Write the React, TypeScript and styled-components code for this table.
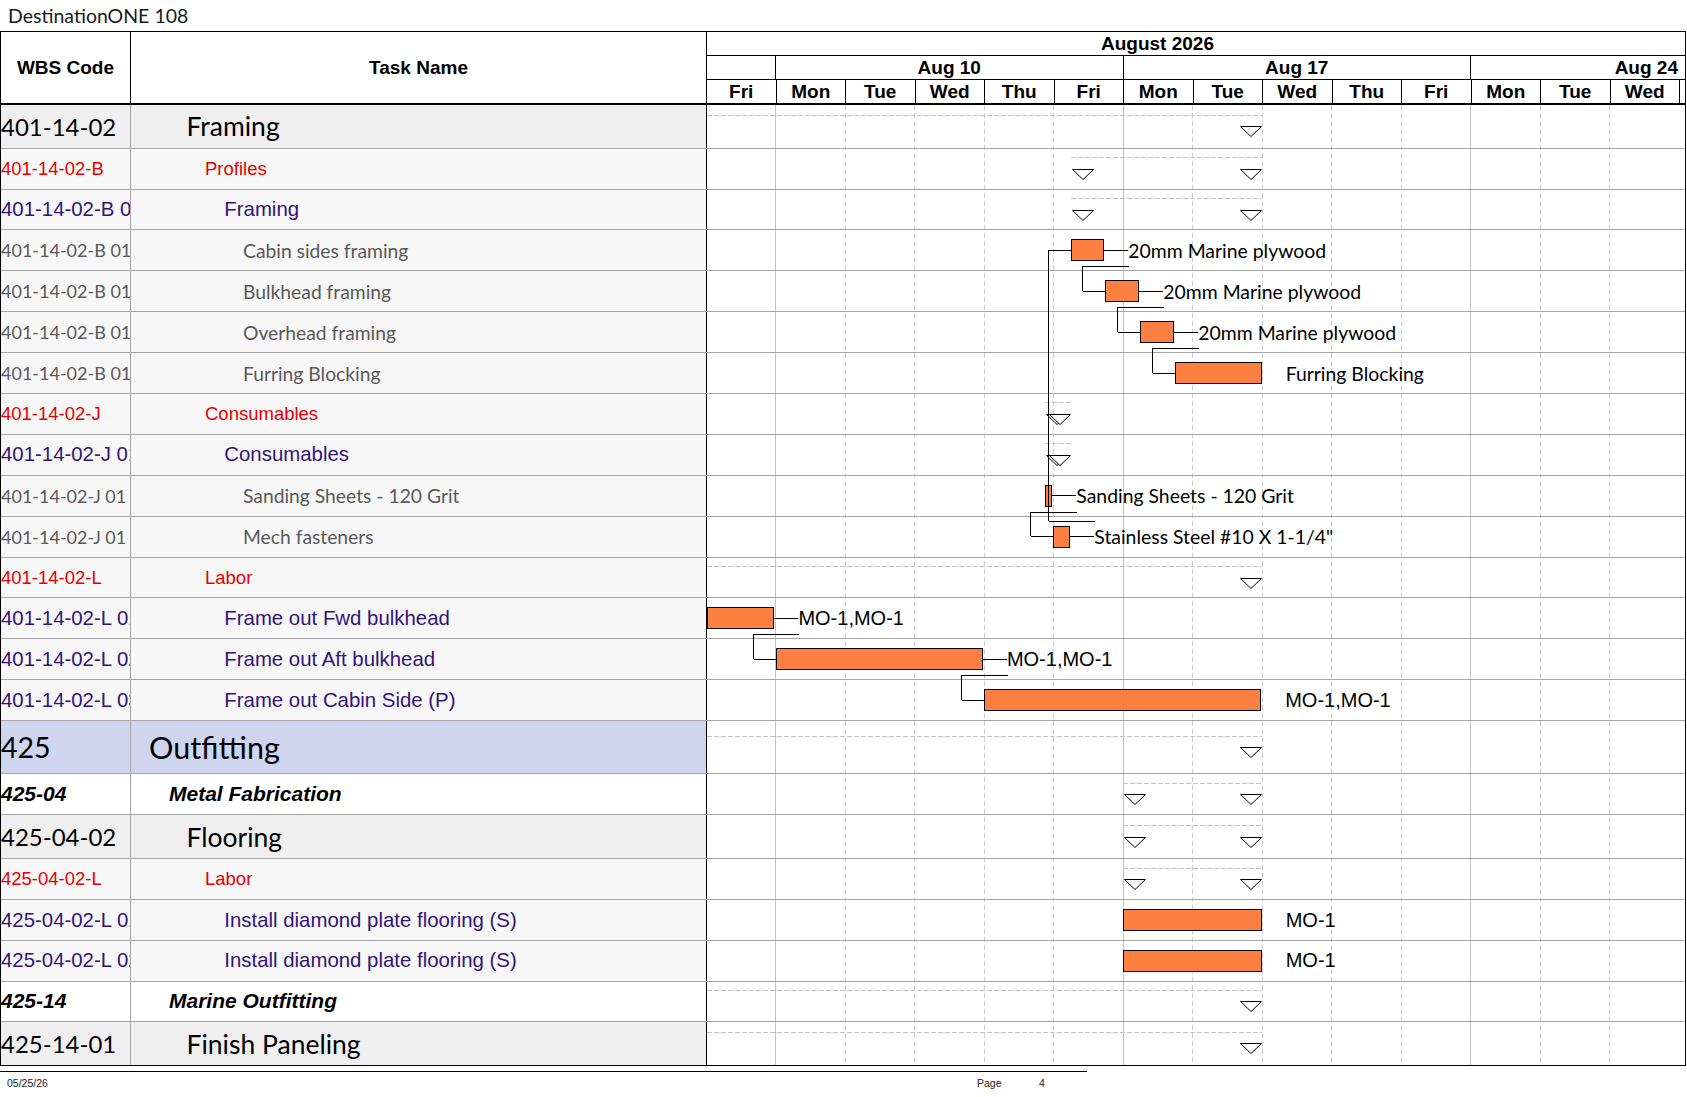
import styled, { createGlobalStyle } from 'styled-components'

const ARIAL = `"Liberation Sans", Arial, sans-serif`
const CALIBRI = `Lato, "Open Sans", sans-serif`

// page coordinates of the gantt drawing area
const GANTT_X = 707
const GANTT_W = 978
const BODY_Y = 105
const DAY0 = 706.3
const DAY = 69.5

type Level = 1 | 2 | 3 | 4 | 5 | 6

interface Bar {
  from: number
  to: number
  label: string
  line: boolean
  arial?: boolean
}

interface Summary {
  from: number
  to: number
  start: boolean
  end: boolean
}

interface Task {
  wbs: string
  name: string
  level: Level
  h: number
  bar?: Bar
  sum?: Summary
}

interface LevelStyle {
  bg: string
  font: string
  size: number
  wbsSize: number
  weight: number
  italic: boolean
  color: string
  indent: number
}

const levels: Record<Level, LevelStyle> = {
  1: { bg: '#cfd5ee', font: CALIBRI, size: 30.5, wbsSize: 28.5, weight: 400, italic: false, color: '#000', indent: 18 },
  2: { bg: '#ffffff', font: ARIAL, size: 21, wbsSize: 21, weight: 700, italic: true, color: '#000', indent: 38 },
  3: { bg: '#efefef', font: CALIBRI, size: 26.5, wbsSize: 24, weight: 400, italic: false, color: '#000', indent: 55.5 },
  4: { bg: '#f7f7f7', font: ARIAL, size: 18.5, wbsSize: 18.5, weight: 400, italic: false, color: '#e60000', indent: 74 },
  5: { bg: '#f7f7f7', font: ARIAL, size: 20.4, wbsSize: 20.4, weight: 400, italic: false, color: '#33137a', indent: 93.3 },
  6: { bg: '#f7f7f7', font: CALIBRI, size: 19.3, wbsSize: 18, weight: 400, italic: false, color: '#595959', indent: 112 },
}

const framingSum: Summary = { from: 1071.3, to: 1261.7, start: true, end: true }
const consumSum: Summary = { from: 1045.3, to: 1070.7, start: true, end: true }
const floorSum: Summary = { from: 1123.3, to: 1261.7, start: true, end: true }
const openSum: Summary = { from: 707, to: 1261.7, start: false, end: true }

const tasks: Task[] = [
  { wbs: '401-14-02', name: 'Framing', level: 3, h: 43.7, sum: openSum },
  { wbs: '401-14-02-B', name: 'Profiles', level: 4, h: 40.9, sum: framingSum },
  { wbs: '401-14-02-B 01', name: 'Framing', level: 5, h: 40.9, sum: framingSum },
  { wbs: '401-14-02-B 01', name: 'Cabin sides framing', level: 6, h: 40.9, bar: { from: 1071.3, to: 1104.3, label: '20mm Marine plywood', line: true } },
  { wbs: '401-14-02-B 01', name: 'Bulkhead framing', level: 6, h: 40.9, bar: { from: 1105.3, to: 1139.3, label: '20mm Marine plywood', line: true } },
  { wbs: '401-14-02-B 01', name: 'Overhead framing', level: 6, h: 40.9, bar: { from: 1140.3, to: 1174.3, label: '20mm Marine plywood', line: true } },
  { wbs: '401-14-02-B 01', name: 'Furring Blocking', level: 6, h: 40.9, bar: { from: 1175.3, to: 1261.7, label: 'Furring Blocking', line: false } },
  { wbs: '401-14-02-J', name: 'Consumables', level: 4, h: 40.9, sum: consumSum },
  { wbs: '401-14-02-J 01', name: 'Consumables', level: 5, h: 40.9, sum: consumSum },
  { wbs: '401-14-02-J 01', name: 'Sanding Sheets - 120 Grit', level: 6, h: 40.9, bar: { from: 1045.3, to: 1052.3, label: 'Sanding Sheets - 120 Grit', line: true } },
  { wbs: '401-14-02-J 01', name: 'Mech fasteners', level: 6, h: 40.9, bar: { from: 1053.3, to: 1070.3, label: 'Stainless Steel #10 X 1-1/4"', line: true } },
  { wbs: '401-14-02-L', name: 'Labor', level: 4, h: 40.9, sum: openSum },
  { wbs: '401-14-02-L 01', name: 'Frame out Fwd bulkhead', level: 5, h: 40.9, bar: { from: 707, to: 774.4, label: 'MO-1,MO-1', line: true, arial: true } },
  { wbs: '401-14-02-L 02', name: 'Frame out Aft bulkhead', level: 5, h: 40.9, bar: { from: 775.8, to: 982.9, label: 'MO-1,MO-1', line: true, arial: true } },
  { wbs: '401-14-02-L 03', name: 'Frame out Cabin Side (P)', level: 5, h: 40.9, bar: { from: 984.2, to: 1261.2, label: 'MO-1,MO-1', line: false, arial: true } },
  { wbs: '425', name: 'Outfitting', level: 1, h: 53, sum: openSum },
  { wbs: '425-04', name: 'Metal Fabrication', level: 2, h: 41, sum: floorSum },
  { wbs: '425-04-02', name: 'Flooring', level: 3, h: 44, sum: floorSum },
  { wbs: '425-04-02-L', name: 'Labor', level: 4, h: 41, sum: floorSum },
  { wbs: '425-04-02-L 01', name: 'Install diamond plate flooring (S)', level: 5, h: 41, bar: { from: 1123.3, to: 1261.7, label: 'MO-1', line: false, arial: true } },
  { wbs: '425-04-02-L 02', name: 'Install diamond plate flooring (S)', level: 5, h: 40.5, bar: { from: 1123.3, to: 1261.7, label: 'MO-1', line: false, arial: true } },
  { wbs: '425-14', name: 'Marine Outfitting', level: 2, h: 40.5, sum: openSum },
  { wbs: '425-14-01', name: 'Finish Paneling', level: 3, h: 43, sum: openSum },
]

// predecessor -> successor
const links: [number, number][] = [
  [3, 4],
  [4, 5],
  [5, 6],
  [9, 10],
  [12, 13],
  [13, 14],
  [10, 3],
]

const weeks = [
  { label: '', w: '69px', align: 'center' },
  { label: 'Aug 10', w: '347.5px', align: 'center' },
  { label: 'Aug 17', w: '347.5px', align: 'center' },
  { label: 'Aug 24', w: '1fr', align: 'right' },
]

const days = ['Fri', 'Mon', 'Tue', 'Wed', 'Thu', 'Fri', 'Mon', 'Tue', 'Wed', 'Thu', 'Fri', 'Mon', 'Tue', 'Wed', '']

const GlobalStyle = createGlobalStyle`
  * { box-sizing: border-box; }
  body {
    margin: 0;
    background: #fff;
    font-family: ${ARIAL};
  }
`

const Page = styled.div`
  width: 1687px;
  height: 1097px;
  overflow: hidden;
  background: #fff;
`

const Title = styled.div`
  height: 31px;
  display: flex;
  align-items: center;
  padding-left: 8px;
  font-family: ${CALIBRI};
  font-size: 19.5px;
  color: #1a1a1a;
`

const Chart = styled.div`
  width: 1686px;
  border: 1px solid #000;
`

const Header = styled.div`
  display: grid;
  grid-template-columns: 130px 576px ${GANTT_W}px;
  height: 73px;
  border-bottom: 2px solid #000;
  font-family: ${ARIAL};
  font-weight: 700;
  font-size: 19px;
  color: #000;
`

const HeadCell = styled.div`
  display: flex;
  align-items: center;
  justify-content: center;
  border-right: 1px solid #000;
`

const Timescale = styled.div`
  display: grid;
  grid-template-rows: 24px 24px 1fr;
`

const MonthRow = styled.div`
  display: flex;
  align-items: center;
  justify-content: center;
  padding-right: 77px;
  border-bottom: 1px solid #000;
`

const WeekRow = styled.div<{ $cols: string }>`
  display: grid;
  grid-template-columns: ${(p) => p.$cols};
  border-bottom: 1px solid #000;
`

const WeekCell = styled.div<{ $align: string }>`
  display: flex;
  align-items: center;
  justify-content: ${(p) => (p.$align === 'right' ? 'flex-end' : 'center')};
  padding-right: ${(p) => (p.$align === 'right' ? '7px' : '0')};
  border-right: 1px solid #000;
  white-space: nowrap;
  &:last-child {
    border-right: none;
  }
`

const DayRow = styled.div`
  display: grid;
  grid-template-columns: repeat(14, ${DAY}px) 1fr;
`

const DayCell = styled.div`
  display: flex;
  align-items: center;
  justify-content: center;
  border-right: 1px solid #000;
  &:last-child {
    border-right: none;
  }
`

const Body = styled.div`
  position: relative;
`

const Rows = styled.div`
  position: relative;
`

const Row = styled.div<{ $h: number }>`
  display: grid;
  grid-template-columns: 130px 576px ${GANTT_W}px;
  height: ${(p) => p.$h}px;
  border-bottom: 1px solid #a6a6a6;
  &:last-child {
    border-bottom: none;
  }
`

const TextCell = styled.div<{ $lv: Level }>`
  display: flex;
  align-items: center;
  overflow: hidden;
  white-space: nowrap;
  background: ${(p) => levels[p.$lv].bg};
  color: ${(p) => levels[p.$lv].color};
  font-family: ${(p) => levels[p.$lv].font};
  font-weight: ${(p) => levels[p.$lv].weight};
  font-style: ${(p) => (levels[p.$lv].italic ? 'italic' : 'normal')};
`

const WbsCell = styled(TextCell)`
  border-right: 1px solid #a6a6a6;
  font-size: ${(p) => levels[p.$lv].wbsSize}px;
`

const NameCell = styled(TextCell)`
  border-right: 1px solid #000;
  padding-left: ${(p) => levels[p.$lv].indent}px;
  font-size: ${(p) => levels[p.$lv].size}px;
`

const GanttCell = styled.div`
  position: relative;
`

const BarBox = styled.div`
  position: absolute;
  height: 22px;
  background: #fe8040;
  border: 1px solid #000;
`

const BarLabel = styled.div`
  position: absolute;
  height: 22px;
  display: flex;
  align-items: center;
  white-space: nowrap;
`

const Connector = styled.span<{ $show: boolean }>`
  width: 24px;
  flex: none;
  align-self: center;
  border-top: 1px solid ${(p) => (p.$show ? '#000' : 'transparent')};
`

const LabelText = styled.span<{ $arial?: boolean }>`
  font-family: ${(p) => (p.$arial ? ARIAL : CALIBRI)};
  font-size: ${(p) => (p.$arial ? 20 : 19.4)}px;
  color: #000;
`

const SummaryDash = styled.div`
  position: absolute;
  height: 1px;
  background: repeating-linear-gradient(90deg, #c4c4c4 0 5px, transparent 5px 7px);
`

const Mark = styled.svg`
  position: absolute;
  width: 22px;
  height: 11px;
  overflow: visible;
`

const Overlay = styled.svg`
  position: absolute;
  left: ${GANTT_X - 1}px;
  top: 0;
  pointer-events: none;
`

const Footer = styled.footer`
  margin-top: 4.7px;
  font-family: ${ARIAL};
  font-size: 10.5px;
  color: #222;
`

const FooterRule = styled.div`
  width: 1087px;
  border-top: 1px solid #000;
`

const FooterLine = styled.div`
  display: grid;
  grid-template-columns: 970px 62px auto;
  padding: 5px 0 0 7px;
  line-height: 12px;
`

function Triangle({ x, y }: { x: number; y: number }) {
  return (
    <Mark style={{ left: x, top: y }} viewBox="0 0 22 11">
      <polygon points="0.5,0.5 21.5,0.5 11,10.5" fill="#fff" stroke="#000" strokeWidth="1" />
    </Mark>
  )
}

function GanttContent({ task }: { task: Task }) {
  const mid = task.h / 2
  const { bar, sum } = task
  return (
    <GanttCell>
      {sum && (
        <>
          <SummaryDash style={{ left: sum.from - GANTT_X, width: sum.to - sum.from, top: mid - 12 }} />
          {sum.start && <Triangle x={sum.from - GANTT_X + 0.4} y={mid - 0.5} />}
          {sum.end && <Triangle x={sum.to - GANTT_X - 22} y={mid - 0.5} />}
        </>
      )}
      {bar && (
        <>
          <BarBox style={{ left: bar.from - GANTT_X, width: bar.to - bar.from, top: mid - 11.5 }} />
          <BarLabel style={{ left: bar.to - GANTT_X, top: mid - 11.5 }}>
            <Connector $show={bar.line} />
            <LabelText $arial={bar.arial}>{bar.label}</LabelText>
          </BarLabel>
        </>
      )}
    </GanttCell>
  )
}

export default function App() {
  const tops: number[] = []
  let y = BODY_Y
  tasks.forEach((t) => {
    tops.push(y)
    y += t.h
  })
  const bodyH = y - BODY_Y
  const center = (i: number) => tops[i] + tasks[i].h / 2
  const px = (v: number) => Math.round(v) + 0.5

  const gridLines = Array.from({ length: 13 }, (_, i) => i + 1).map((k) => ({
    x: px(DAY0 + k * DAY - 0.5),
    solid: k === 1 || k === 6 || k === 11,
  }))

  const linkPaths = links.map(([a, b]) => {
    const pa = tasks[a].bar!
    const pb = tasks[b].bar!
    const x1 = px(pa.to + 24)
    const y1 = px(b > a ? center(a) + 15.3 : center(a) - 16.5)
    const x2 = px(pb.from - 23)
    const y2 = px(center(b) - 1)
    const x3 = pb.from
    return `${x1},${y1} ${x2},${y1} ${x2},${y2} ${x3},${y2}`
  })

  const weekCols = weeks.map((w) => w.w).join(' ')

  return (
    <Page>
      <GlobalStyle />
      <Title>DestinationONE 108</Title>
      <Chart>
        <Header>
          <HeadCell>WBS Code</HeadCell>
          <HeadCell>Task Name</HeadCell>
          <Timescale>
            <MonthRow>August 2026</MonthRow>
            <WeekRow $cols={weekCols}>
              {weeks.map((w, i) => (
                <WeekCell key={i} $align={w.align}>
                  {w.label}
                </WeekCell>
              ))}
            </WeekRow>
            <DayRow>
              {days.map((d, i) => (
                <DayCell key={i}>{d}</DayCell>
              ))}
            </DayRow>
          </Timescale>
        </Header>
        <Body>
          <Overlay width={GANTT_W} height={bodyH} viewBox={`${GANTT_X} ${BODY_Y} ${GANTT_W} ${bodyH}`} shapeRendering="crispEdges">
            {gridLines.map((g) => (
              <line
                key={g.x}
                x1={g.x}
                x2={g.x}
                y1={BODY_Y}
                y2={BODY_Y + bodyH}
                stroke={g.solid ? '#c2c2c2' : '#cdcdcd'}
                strokeWidth="1"
                strokeDasharray={g.solid ? undefined : '5 3'}
              />
            ))}
          </Overlay>
          <Rows>
            {tasks.map((t, i) => (
              <Row key={i} $h={t.h}>
                <WbsCell $lv={t.level}>{t.wbs}</WbsCell>
                <NameCell $lv={t.level}>{t.name}</NameCell>
                <GanttContent task={t} />
              </Row>
            ))}
          </Rows>
          <Overlay width={GANTT_W} height={bodyH} viewBox={`${GANTT_X} ${BODY_Y} ${GANTT_W} ${bodyH}`} shapeRendering="crispEdges">
            {linkPaths.map((p, i) => (
              <polyline key={i} points={p} fill="none" stroke="#000" strokeWidth="1" />
            ))}
          </Overlay>
        </Body>
      </Chart>
      <Footer>
        <FooterRule />
        <FooterLine>
          <span>05/25/26</span>
          <span>Page</span>
          <span>4</span>
        </FooterLine>
      </Footer>
    </Page>
  )
}
